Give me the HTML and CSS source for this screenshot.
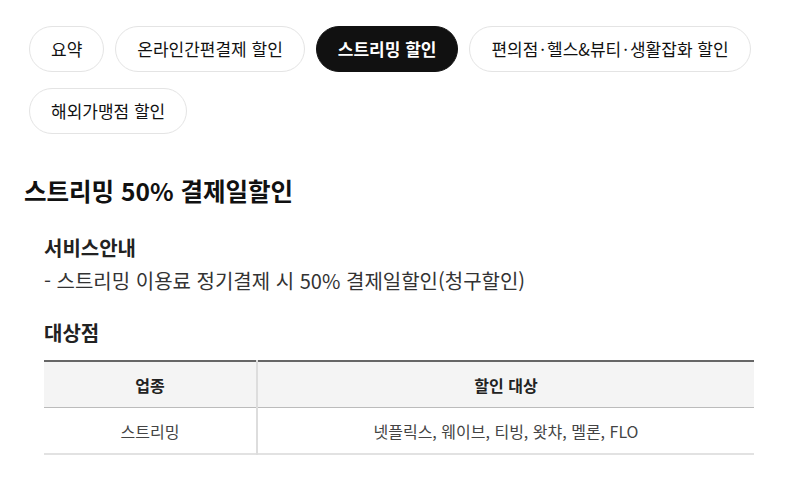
FILE: index.html
```html
<!DOCTYPE html>
<html lang="ko">
<head>
    <meta charset="UTF-8">
    <title>스트리밍 할인</title>
    <link rel="stylesheet" href="styles.css">
</head>
<body>

    <!-- Category tabs -->
    <div class="tabs">
        <button class="tab">요약</button>
        <button class="tab">온라인간편결제 할인</button>
        <button class="tab active">스트리밍 할인</button>
        <button class="tab">편의점<span class="dot">·</span>헬스&amp;뷰티<span class="dot">·</span>생활잡화 할인</button>
        <button class="tab">해외가맹점 할인</button>
    </div>

    <!-- Benefit detail -->
    <div class="benefit">
        <h2 class="benefit-title">스트리밍 50% 결제일할인</h2>

        <div class="section">
            <h3>서비스안내</h3>
            <p class="desc">- 스트리밍 이용료 정기결제 시 50% 결제일할인(청구할인)</p>
        </div>

        <div class="section">
            <h3 class="target-title">대상점</h3>
            <table class="target-table">
                <thead>
                    <tr>
                        <th class="col-type">업종</th>
                        <th>할인 대상</th>
                    </tr>
                </thead>
                <tbody>
                    <tr>
                        <td class="col-type">스트리밍</td>
                        <td>넷플릭스, 웨이브, 티빙, 왓챠, 멜론, FLO</td>
                    </tr>
                </tbody>
            </table>
        </div>
    </div>

</body>
</html>
```

FILE: styles.css
```css
body {
    margin: 0;
    background-color: #fff;
    color: #111;
    font-family: "Noto Sans CJK KR", "Noto Sans", sans-serif;
}
.tabs {
    display: flex;
    flex-wrap: wrap;
    gap: 16px 11px;
    padding: 26px 20px 0 29px;
}
.tab {
    height: 46px;
    padding: 0 21px;
    border: 1px solid #e4e4e4;
    border-radius: 23px;
    background-color: #fff;
    color: #111;
    font-family: inherit;
    font-size: 17px;
    line-height: 44px;
    cursor: pointer;
}
.tab .dot {
    margin: 0 2px;
}
.tab.active {
    background-color: #111;
    border-color: #111;
    color: #fff;
    font-weight: bold;
}
.benefit {
    padding: 0 33px 0 24px;
}
.benefit-title {
    margin: 40px 0 0;
    font-size: 24.5px;
    line-height: 34px;
    font-weight: bold;
    color: #111;
}
.section {
    padding-left: 20px;
}
.section h3 {
    margin: 27px 0 0;
    font-size: 20px;
    line-height: 26px;
    font-weight: bold;
    color: #222;
}
.section h3.target-title {
    margin-top: 26px;
}
.desc {
    margin: 7px 0 0;
    font-size: 20px;
    line-height: 26px;
    color: #333;
}
.target-table {
    width: 710px;
    margin-top: 14px;
    border-collapse: collapse;
    border-top: 2px solid #666;
    border-bottom: 2px solid #e2e2e2;
    font-size: 16px;
}
.target-table th {
    height: 45px;
    padding: 0;
    background-color: #f4f4f4;
    border-bottom: 1px solid #bbb;
    color: #222;
    font-weight: bold;
}
.target-table td {
    height: 45px;
    padding: 0;
    text-align: center;
    color: #444;
}
.target-table .col-type {
    width: 212px;
    border-right: 2px solid #ddd;
}
```
